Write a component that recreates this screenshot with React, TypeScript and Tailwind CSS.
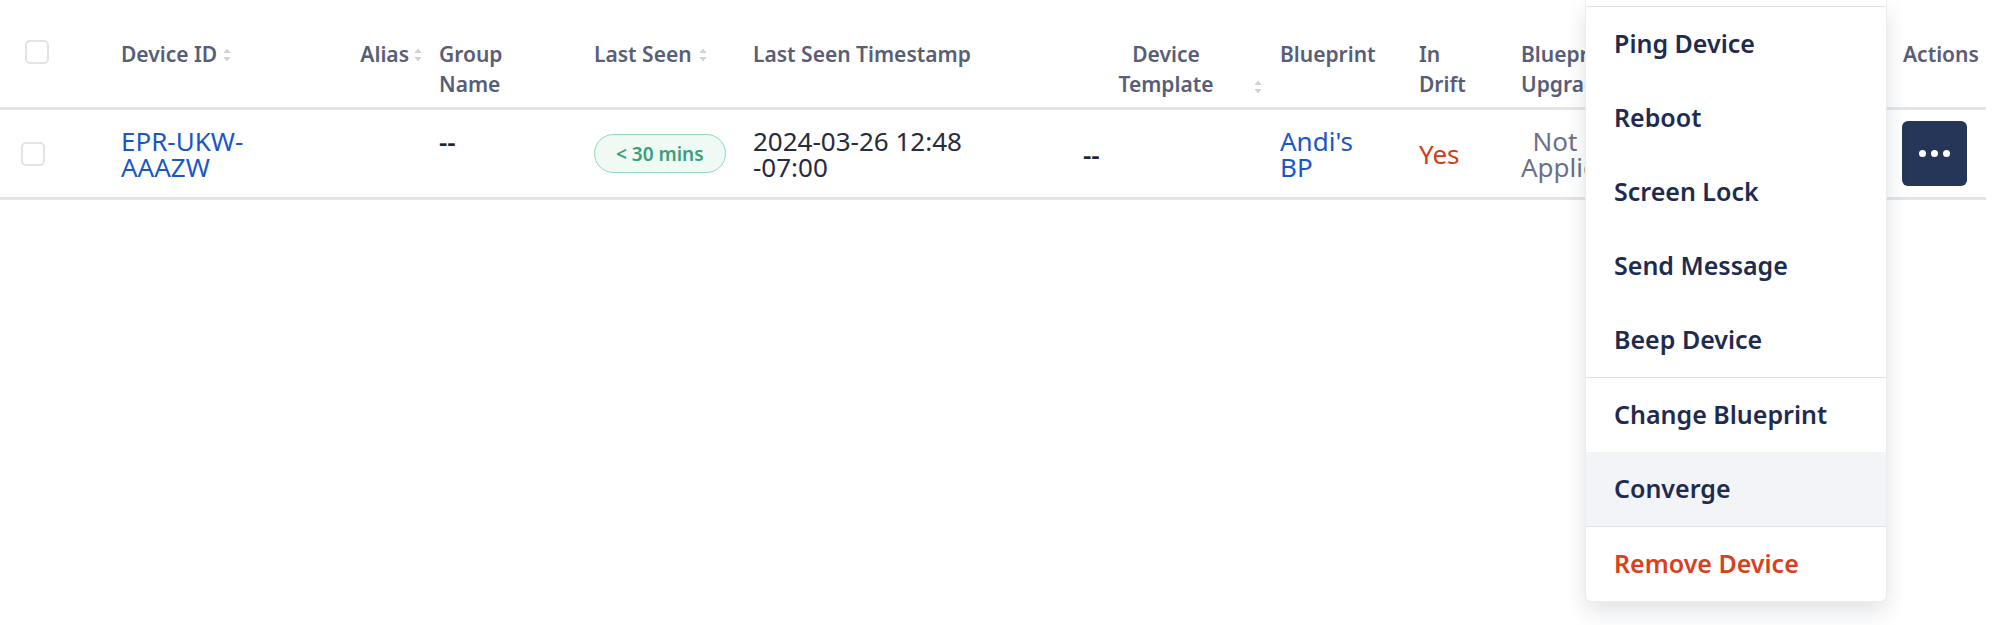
import React from "react";

function SortIcon() {
  return (
    <svg width="8" height="14" viewBox="0 0 8 14" className="shrink-0">
      <path d="M4 0.5 L7.5 5 H0.5 Z" fill="#cfd1d8" />
      <path d="M4 13.5 L7.5 9 H0.5 Z" fill="#cfd1d8" />
    </svg>
  );
}

function Checkbox() {
  return <div className="w-[24px] h-[24px] rounded-[5px] border-2 border-[#e2e3e8] bg-white" />;
}

const menuGroups = [
  ["Ping Device", "Reboot", "Screen Lock", "Send Message", "Beep Device"],
  ["Change Blueprint", "Converge"],
  ["Remove Device"],
];

function ActionMenu() {
  return (
    <div className="absolute left-[1585px] top-0 w-[302px] bg-white rounded-b-[6px] border-x border-b border-[#ececf0] shadow-[0_10px_22px_rgba(20,30,60,0.12)] pt-[6px]">
      {menuGroups.map((group, gi) => (
        <div key={gi} className="border-t border-[#dfe0e5]">
          {group.map((item) => (
            <div
              key={item}
              className={`h-[74px] flex items-center px-[28px] text-[25px] font-semibold ${
                item === "Converge" ? "bg-[#f3f4f8]" : ""
              } ${item === "Remove Device" ? "text-[#d9411e]" : "text-[#1e2b4f]"}`}
            >
              {item}
            </div>
          ))}
        </div>
      ))}
    </div>
  );
}

export default function App() {
  return (
    <div className="relative w-[1999px] h-[625px] bg-white overflow-hidden font-['Noto_Sans',sans-serif]">
      <div className="w-[1986px]">
        {/* header */}
        <div className="flex h-[110px] border-b-[3px] border-[#e4e5e9] text-[21px] leading-[30px] font-semibold text-[#585e76]">
          <div className="w-[121px] pt-[40px] pl-[25px]">
            <Checkbox />
          </div>
          <div className="w-[229px] pt-[39px] flex items-start gap-[6px]">
            <span>Device ID</span>
            <span className="pt-[9px]"><SortIcon /></span>
          </div>
          <div className="w-[89px] pt-[39px] flex justify-end items-start gap-[5px] pr-[17px]">
            <span>Alias</span>
            <span className="pt-[9px]"><SortIcon /></span>
          </div>
          <div className="w-[155px] pt-[39px]">
            Group
            <br />
            Name
          </div>
          <div className="w-[159px] pt-[39px] flex items-start gap-[7px]">
            <span>Last Seen</span>
            <span className="pt-[9px]"><SortIcon /></span>
          </div>
          <div className="w-[330px] pt-[39px]">Last Seen Timestamp</div>
          <div className="w-[197px] pt-[39px] flex items-start">
            <div className="w-[166px] text-center">
              Device
              <br />
              Template
            </div>
            <span className="ml-[5px] pt-[41px]"><SortIcon /></span>
          </div>
          <div className="w-[139px] pt-[39px]">Blueprint</div>
          <div className="w-[102px] pt-[39px]">
            In
            <br />
            Drift
          </div>
          <div className="w-[380px] pt-[39px]">
            <div className="w-[68px]">Blueprint Upgrade</div>
          </div>
          <div className="w-[85px] pt-[39px] pl-[2px]">Actions</div>
        </div>

        {/* row */}
        <div className="flex items-center h-[90px] border-b-[3px] border-[#e4e5e9] text-[26px] leading-[26px] text-[#262b40]">
          <div className="w-[121px] pl-[21px]">
            <Checkbox />
          </div>
          <div className="w-[229px] text-[#1b57c4]">
            EPR-UKW-
            <br />
            AAAZW
          </div>
          <div className="w-[89px]" />
          <div className="w-[155px] h-[52px] font-semibold text-[#1f2433]">--</div>
          <div className="w-[159px]">
            <span className="inline-flex items-center h-[39px] px-[21px] rounded-full border-[1.5px] border-[#92d8ba] bg-[#effaf5] text-[19px] font-semibold text-[#3c9e78]">
              &lt; 30 mins
            </span>
          </div>
          <div className="w-[330px]">
            2024-03-26 12:48
            <br />
            -07:00
          </div>
          <div className="w-[197px] font-semibold text-[#1f2433]">--</div>
          <div className="w-[139px] text-[#1b57c4]">
            Andi's
            <br />
            BP
          </div>
          <div className="w-[102px] text-[#d33c1d]">Yes</div>
          <div className="w-[380px] text-[#6c7084]">
            <div className="w-[68px] text-center">Not Applicable</div>
          </div>
          <div className="w-[85px] pl-[1px]">
            <button className="w-[65px] h-[65px] rounded-[6px] bg-[#263659] flex items-center justify-center gap-[5px]">
              <span className="w-[7px] h-[7px] rounded-full bg-white" />
              <span className="w-[7px] h-[7px] rounded-full bg-white" />
              <span className="w-[7px] h-[7px] rounded-full bg-white" />
            </button>
          </div>
        </div>
      </div>

      <ActionMenu />
    </div>
  );
}
